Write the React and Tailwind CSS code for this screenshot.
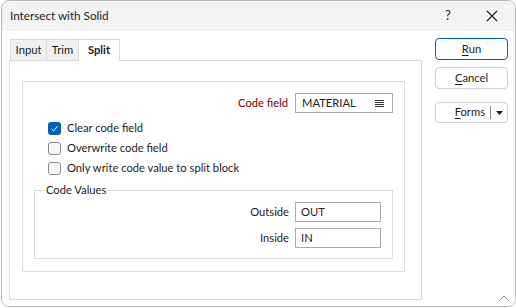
export default function App() {
  const font = { fontFamily: 'Lato, "Noto Sans", sans-serif' };

  return (
    <div className="w-[516px] h-[308px] bg-white overflow-hidden text-[11.2px] text-[#1b1b1b]" style={font}>
      <div className="w-[515px] h-[307px] ml-[1px] border border-[#b9b9b9] rounded-[8px] overflow-hidden flex flex-col relative">
        {/* Title bar */}
        <div className="h-[30px] shrink-0 bg-[#f3f3f3] flex items-center pl-[8px]">
          <span className="flex-1 text-[11.7px]">Intersect with Solid</span>
          <span className="w-[46px] text-center text-[13px] mr-[-2px]">?</span>
          <div className="w-[46px] flex items-center justify-center">
            <svg width="12" height="12" viewBox="0 0 12 12">
              <path d="M1 1 L11 11 M11 1 L1 11" stroke="#1b1b1b" strokeWidth="1.1" fill="none" />
            </svg>
          </div>
        </div>

        {/* Body */}
        <div className="flex-1 bg-white flex pl-[7px] pt-[7px]">
          {/* Tabs + panel */}
          <div className="w-[413px] flex flex-col">
            <div className="flex items-end h-[22px] pl-[1px]">
              <div className="h-[21px] w-[37px] bg-[#f0f0f0] border border-b-0 border-[#d9d9d9] flex items-center justify-center">Input</div>
              <div className="h-[21px] w-[32px] bg-[#f0f0f0] border border-b-0 border-l-0 border-[#d9d9d9] flex items-center justify-center">Trim</div>
              <div className="h-[22px] w-[41px] bg-white border border-b-0 border-l-0 border-[#d9d9d9] flex items-center justify-center font-bold mb-[-1px] relative z-10">Split</div>
            </div>
            <div className="h-[240px] border border-[#d9d9d9] pl-[12px] pr-[16px] pt-[20px]">
              {/* Outer group */}
              <div className="h-[191px] border border-[#dcdcdc] flex flex-col">
                <div className="flex items-center justify-end pr-[11px] pt-[11px]">
                  <span className="text-[#7f0000] mr-[7px]">Code field</span>
                  <div className="w-[98px] h-[20px] border border-[#a8a8a8] flex items-center pl-[6px] pr-[8px]">
                    <span className="flex-1">MATERIAL</span>
                    <svg width="9" height="9" viewBox="0 0 9 9">
                      <path d="M0 1.5 H9 M0 3.5 H9 M0 5.5 H9 M0 7.5 H9" stroke="#333" strokeWidth="1" />
                    </svg>
                  </div>
                </div>
                <div className="flex flex-col gap-[6px] pl-[25px] pt-[8px]">
                  <label className="flex items-center h-[14px]">
                    <span className="w-[13px] h-[13px] rounded-[3px] bg-[#005fb8] flex items-center justify-center mr-[6px]">
                      <svg width="9" height="9" viewBox="0 0 9 9">
                        <path d="M1.5 4.8 L3.6 6.8 L7.5 2.2" stroke="white" strokeWidth="1" fill="none" />
                      </svg>
                    </span>
                    Clear code field
                  </label>
                  <label className="flex items-center h-[14px]">
                    <span className="w-[13px] h-[13px] rounded-[3px] border border-[#8a8a8a] bg-[#f7f7f7] mr-[6px]" />
                    Overwrite code field
                  </label>
                  <label className="flex items-center h-[14px]">
                    <span className="w-[13px] h-[13px] rounded-[3px] border border-[#8a8a8a] bg-[#f7f7f7] mr-[6px]" />
                    Only write code value to split block
                  </label>
                </div>

                {/* Code Values group */}
                <div className="mx-[11px] mt-[15px] h-[69px] border border-[#dcdcdc] relative">
                  <span className="absolute left-[10px] top-[-9px] bg-white px-[1px] leading-[16px]">Code Values</span>
                  <div className="flex flex-col items-end pr-[11px] pt-[11px] gap-[6px]">
                    <div className="flex items-center">
                      <span className="mr-[6px]">Outside</span>
                      <div className="w-[86px] h-[20px] border border-[#a8a8a8] flex items-center pl-[5px]">OUT</div>
                    </div>
                    <div className="flex items-center">
                      <span className="mr-[6px]">Inside</span>
                      <div className="w-[86px] h-[20px] border border-[#a8a8a8] flex items-center pl-[5px]">IN</div>
                    </div>
                  </div>
                </div>
              </div>
            </div>
          </div>

          {/* Buttons */}
          <div className="ml-[13px] flex flex-col w-[73px]">
            <button className="h-[22px] border border-[#005fb8] rounded-[4px] bg-white">
              <span className="underline underline-offset-2">R</span>un
            </button>
            <button className="h-[22px] mt-[7px] border border-[#d0d0d0] rounded-[4px] bg-white">
              <span className="underline underline-offset-2">C</span>ancel
            </button>
            <div className="h-[21px] mt-[13px] border border-[#d0d0d0] rounded-[4px] bg-white flex items-center">
              <span className="flex-1 text-right pr-[5px]">
                <span className="underline underline-offset-2">F</span>orms
              </span>
              <span className="w-px h-[13px] bg-[#8a8a8a]" />
              <span className="w-[16px] flex items-center justify-center">
                <svg width="7" height="4" viewBox="0 0 7 4">
                  <path d="M0 0 H7 L3.5 4 Z" fill="#1b1b1b" />
                </svg>
              </span>
            </div>
          </div>
        </div>

        {/* size grip */}
        <svg className="absolute right-[5px] bottom-[4px]" width="12" height="7" viewBox="0 0 12 7">
          <path d="M1 6 L6 1 L11 6" stroke="#8a8a8a" strokeWidth="1" fill="none" />
        </svg>
      </div>
    </div>
  );
}
